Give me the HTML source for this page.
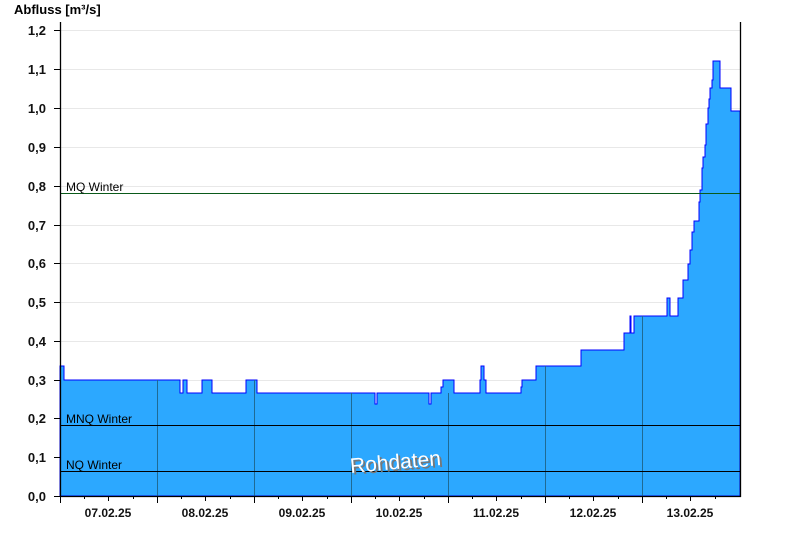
<!DOCTYPE html>
<html><head><meta charset="utf-8"><style>
html,body{margin:0;padding:0;background:#fff;width:800px;height:550px;overflow:hidden}
svg{display:block;font-family:"Liberation Sans",Arial,sans-serif}
</style></head><body>
<svg width="800" height="550" xmlns="http://www.w3.org/2000/svg">
<text x="14" y="14" font-size="13" font-weight="bold">Abfluss [m³/s]</text>
<g stroke="#e8e8e8" stroke-width="1">
<line x1="60" y1="30.5" x2="740" y2="30.5"/><line x1="60" y1="69.5" x2="740" y2="69.5"/>
<line x1="60" y1="108.5" x2="740" y2="108.5"/><line x1="60" y1="147.5" x2="740" y2="147.5"/>
<line x1="60" y1="186.5" x2="740" y2="186.5"/><line x1="60" y1="225.5" x2="740" y2="225.5"/>
<line x1="60" y1="263.5" x2="740" y2="263.5"/><line x1="60" y1="302.5" x2="740" y2="302.5"/>
<line x1="60" y1="341.5" x2="740" y2="341.5"/><line x1="60" y1="380.5" x2="740" y2="380.5"/>
<line x1="60" y1="418.5" x2="740" y2="418.5"/><line x1="60" y1="457.5" x2="740" y2="457.5"/>
</g>
<path fill="#2ca8ff" stroke="#0000ff" stroke-width="1" d="M60,496 V366 H64 V380 H180 V393 H183 V380 H187 V393 H202 V380 H212 V393 H246 V380 H257 V393 H375 V404 H377 V393 H429 V404 H431 V393 H441 V387 H443 V380 H454 V393 H480 V380 H481 V366 H484 V380 H486 V393 H521 V387 H522 V380 H536 V366 H581 V350 H624 V333 H630 V316 H631 V333 H634 V316 H667 V298 H670 V316 H678 V298 H683 V280 H688 V264 H690 V250 H692 V232 H694 V221 H699 V202 H700 V190 H702 V168 H703 V157 H705 V145 H706 V124 H708 V108 H709 V99 H710 V88 H712 V80 H713 V61 H720 V88 H731 V111 H740 V496 Z"/>
<g stroke="#1f6a94" stroke-width="1">
<line x1="157.5" y1="380" x2="157.5" y2="496"/><line x1="254.5" y1="380" x2="254.5" y2="496"/>
<line x1="351.5" y1="393" x2="351.5" y2="496"/><line x1="448.5" y1="393" x2="448.5" y2="496"/>
<line x1="545.5" y1="366" x2="545.5" y2="496"/><line x1="642.5" y1="316" x2="642.5" y2="496"/>
</g>
<g stroke="#000" stroke-width="1">
<line x1="60" y1="193.5" x2="740" y2="193.5" stroke="#0a5a1a"/>
<line x1="60" y1="425.5" x2="740" y2="425.5"/>
<line x1="60" y1="471.5" x2="740" y2="471.5"/>
</g>
<g font-size="12" fill="#000">
<text x="66" y="191">MQ Winter</text>
<text x="66" y="423">MNQ Winter</text>
<text x="66" y="469">NQ Winter</text>
</g>
<g transform="translate(396,469) rotate(-5)" font-size="21" text-anchor="middle">
<text x="2" y="2" fill="#777">Rohdaten</text>
<text x="0" y="0" fill="#fff">Rohdaten</text>
</g>
<g stroke="#000" stroke-width="1.3">
<line x1="60.5" y1="22" x2="60.5" y2="497"/>
<line x1="740.5" y1="22" x2="740.5" y2="497"/>
<line x1="60" y1="496.5" x2="741" y2="496.5"/>
</g>
<g stroke="#000" stroke-width="1">
<path d="M54,30.5H60M54,69.5H60M54,108.5H60M54,147.5H60M54,186.5H60M54,225.5H60M54,263.5H60M54,302.5H60M54,341.5H60M54,380.5H60M54,418.5H60M54,457.5H60M54,496.5H60"/>
<path d="M60.5,496V503M157.5,496V503M254.5,496V503M351.5,496V503M448.5,496V503M545.5,496V503M642.5,496V503"/>
<path d="M108.5,496V501M205.5,496V501M302.5,496V501M399.5,496V501M496.5,496V501M593.5,496V501M690.5,496V501"/>
<path d="M84.5,496V499M133.5,496V499M181.5,496V499M230.5,496V499M278.5,496V499M327.5,496V499M375.5,496V499M424.5,496V499M472.5,496V499M521.5,496V499M569.5,496V499M618.5,496V499M666.5,496V499M715.5,496V499"/>
</g>
<g font-size="13" font-weight="bold" text-anchor="end" fill="#111">
<text x="46" y="35">1,2</text><text x="46" y="74">1,1</text><text x="46" y="113">1,0</text>
<text x="46" y="152">0,9</text><text x="46" y="191">0,8</text><text x="46" y="230">0,7</text>
<text x="46" y="268">0,6</text><text x="46" y="307">0,5</text><text x="46" y="346">0,4</text>
<text x="46" y="385">0,3</text><text x="46" y="423">0,2</text><text x="46" y="462">0,1</text>
<text x="46" y="501">0,0</text>
</g>
<g font-size="12" font-weight="bold" text-anchor="middle" fill="#111">
<text x="108" y="517">07.02.25</text><text x="205" y="517">08.02.25</text>
<text x="302" y="517">09.02.25</text><text x="399" y="517">10.02.25</text>
<text x="496" y="517">11.02.25</text><text x="593" y="517">12.02.25</text>
<text x="690" y="517">13.02.25</text>
</g>
</svg>
</body></html>
